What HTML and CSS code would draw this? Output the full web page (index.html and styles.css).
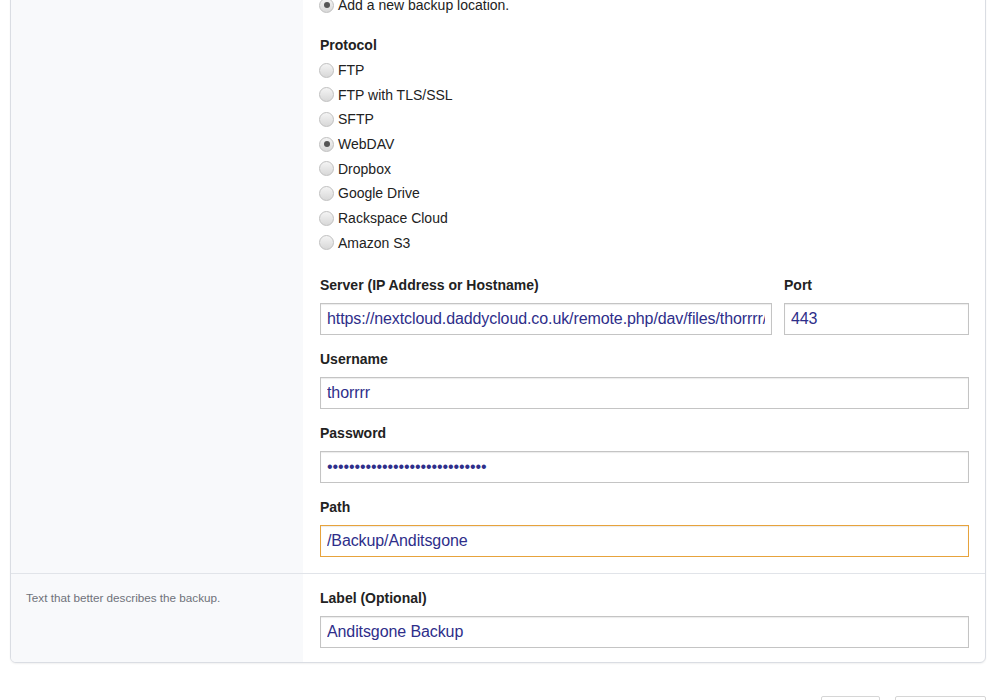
FILE: index.html
```html
<!DOCTYPE html>
<html>
   <head>
      <title>Backup location</title>
      <link rel="stylesheet" href="styles.css">
   </head>
   <body>
      <div class="Card">
         <div class="Row">
            <div class="Side"></div>
            <div class="Main">
               <label class="Choice"><input type="radio" name="loc" checked> Add a new backup location.</label>

               <div class="Group">
                  <div class="GroupTitle">Protocol</div>
                  <label class="Choice"><input type="radio" name="proto"> FTP</label>
                  <label class="Choice"><input type="radio" name="proto"> FTP with TLS/SSL</label>
                  <label class="Choice"><input type="radio" name="proto"> SFTP</label>
                  <label class="Choice"><input type="radio" name="proto" checked> WebDAV</label>
                  <label class="Choice"><input type="radio" name="proto"> Dropbox</label>
                  <label class="Choice"><input type="radio" name="proto"> Google Drive</label>
                  <label class="Choice"><input type="radio" name="proto"> Rackspace Cloud</label>
                  <label class="Choice"><input type="radio" name="proto"> Amazon S3</label>
               </div>

               <div class="Pair">
                  <div class="Field Grow">
                     <label class="FieldLabel">Server (IP Address or Hostname)</label>
                     <input class="Text" type="text" value="https://nextcloud.daddycloud.co.uk/remote.php/dav/files/thorrrr/">
                  </div>
                  <div class="Field Port">
                     <label class="FieldLabel">Port</label>
                     <input class="Text" type="text" value="443">
                  </div>
               </div>

               <div class="Field">
                  <label class="FieldLabel">Username</label>
                  <input class="Text" type="text" value="thorrrr">
               </div>

               <div class="Field">
                  <label class="FieldLabel">Password</label>
                  <input class="Text" type="password" value="thorrrrthorrrrthorrrrthorrrrx">
               </div>

               <div class="Field">
                  <label class="FieldLabel">Path</label>
                  <input class="Text Active" type="text" value="/Backup/Anditsgone" autofocus>
               </div>
            </div>
         </div>

         <div class="Row Divided">
            <div class="Side">
               <div class="Hint">Text that better describes the backup.</div>
            </div>
            <div class="Main Last">
               <div class="Field">
                  <label class="FieldLabel">Label (Optional)</label>
                  <input class="Text" type="text" value="Anditsgone Backup">
               </div>
            </div>
         </div>
      </div>

      <div class="Actions">
         <button class="Btn Small">Back</button>
         <button class="Btn Wide">Continue</button>
      </div>
   </body>
</html>
```

FILE: styles.css
```css
body
{
   margin:      0;
   background:  #ffffff;
   font-family: "Liberation Sans", Arial, sans-serif;
   font-size:   14px;
   color:       #222222;
}
.Card
{
   margin:        -24px 14px 0 10px;
   border:        1px solid #dadde3;
   border-radius: 0 0 6px 6px;
   box-shadow:    0 1px 2px rgba(0, 0, 0, 0.06);
   overflow:      hidden;
   background:    #ffffff;
}
.Row
{
   display: flex;
}
.Divided
{
   border-top: 1px solid #e1e4e9;
}
.Side
{
   width:      292px;
   flex:       none;
   background: #f8f9fb;
}
.Hint
{
   padding:     16px 0 0 15px;
   font-size:   11.7px;
   line-height: 16px;
   color:       #6f727a;
}
.Main
{
   flex:    1;
   padding: 16px 16px 0 17px;
}
.Choice
{
   display:     flex;
   align-items: center;
   height:      24.7px;
   margin-left: -1px;
   line-height: 16px;
}
.Choice input
{
   appearance:    none;
   width:         15px;
   height:        15px;
   margin:        0 4px 0 0;
   border:        1px solid #c0c0c0;
   border-radius: 50%;
   background:    linear-gradient(#f4f4f4, #d8d8d8);
   position:      relative;
}
.Choice input:checked::after
{
   content:       "";
   position:      absolute;
   left:          3.5px;
   top:           3.5px;
   width:         6px;
   height:        6px;
   border-radius: 50%;
   background:    #555555;
}
.Group
{
   margin-top: 19px;
}
.GroupTitle
{
   font-weight:   bold;
   line-height:   16px;
   margin-bottom: 5px;
}
.Pair
{
   display:    flex;
   gap:        12px;
   margin-top: 21.4px;
}
.Grow
{
   flex: 1;
}
.Port
{
   width: 185px;
   flex:  none;
}
.Field
{
   margin-bottom: 16px;
}
.Last .Field
{
   margin-bottom: 14px;
}
.FieldLabel
{
   display:       block;
   font-weight:   bold;
   line-height:   16px;
   margin-bottom: 10px;
}
.Text
{
   display:        block;
   box-sizing:     border-box;
   width:          100%;
   height:         32px;
   margin:         0;
   padding:        0 6px;
   border:         1px solid #c4c4c4;
   box-shadow:     inset 0 1px 1px rgba(0, 0, 0, 0.08);
   font-family:    "Liberation Sans", Arial, sans-serif;
   font-size:      16px;
   letter-spacing: -0.1px;
   color:          #2e2e8a;
   background:     #ffffff;
   outline:        none;
   caret-color:    #000000;
}
.Active, .Text:focus
{
   border-color: #e7a33c;
}
.Actions
{
   display:         flex;
   justify-content: flex-end;
   gap:             15px;
   margin:          33px 14px 0 0;
}
.Btn
{
   height:        32px;
   border:        1px solid #d6d6d6;
   border-radius: 2px;
   background:    #ffffff;
   font-family:   "Liberation Sans", Arial, sans-serif;
   font-size:     14px;
   color:         #333333;
}
.Small { width: 59px; }
.Wide  { width: 91px; }
```
